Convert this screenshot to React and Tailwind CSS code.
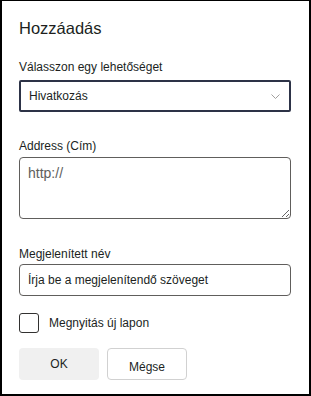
import React from "react";

export default function App() {
  return (
    <div
      className="w-[311px] h-[396px] border-2 border-t border-black bg-white px-[17px] text-[#201f1e]"
      style={{ fontFamily: '"Liberation Sans", Arial, sans-serif' }}
    >
      <h1 className="mt-[17px] text-[16.5px] leading-[20px] font-normal">Hozzáadás</h1>

      <div className="mt-[21px] text-[12px] leading-[16px]">Válasszon egy lehetőséget</div>
      <div className="mt-[5px] flex h-[32px] w-[272px] items-center justify-between rounded-[2px] border-2 border-[#2d3347] pl-[8px] pr-[9px] text-[12px]">
        <span>Hivatkozás</span>
        <svg width="9" height="5" viewBox="0 0 9 5" fill="none">
          <path d="M0.5 0.5 L4.5 4.5 L8.5 0.5" stroke="#a19f9d" strokeWidth="1" />
        </svg>
      </div>

      <div className="mt-[26px] text-[12px] leading-[16px]">Address (Cím)</div>
      <textarea
        className="mt-[3px] block h-[62px] w-[272px] rounded-[4px] border border-[#605e5c] px-[8px] py-[6px] text-[14px] leading-[18px] outline-none placeholder:text-[#605e5c]"
        placeholder="http://"
      />

      <div className="mt-[27px] text-[12px] leading-[16px]">Megjelenített név</div>
      <input
        className="mt-[2px] block h-[32px] w-[272px] rounded-[4px] border border-[#605e5c] px-[8px] text-[12px] outline-none placeholder:text-[#201f1e]"
        placeholder="Írja be a megjelenítendő szöveget"
      />

      <div className="mt-[17px] flex items-center gap-[10px]">
        <div className="h-[20px] w-[20px] rounded-[3px] border border-[#323130]" />
        <span className="text-[12px] leading-[16px]">Megnyitás új lapon</span>
      </div>

      <div className="mt-[15px] flex gap-[8px]">
        <button className="h-[32px] w-[80px] rounded-[4px] bg-[#f0f0f0] text-[12px]">OK</button>
        <button className="h-[32px] w-[80px] rounded-[4px] border border-[#d1d1d1] bg-white pt-[6px] text-[12px]">Mégse</button>
      </div>
    </div>
  );
}
